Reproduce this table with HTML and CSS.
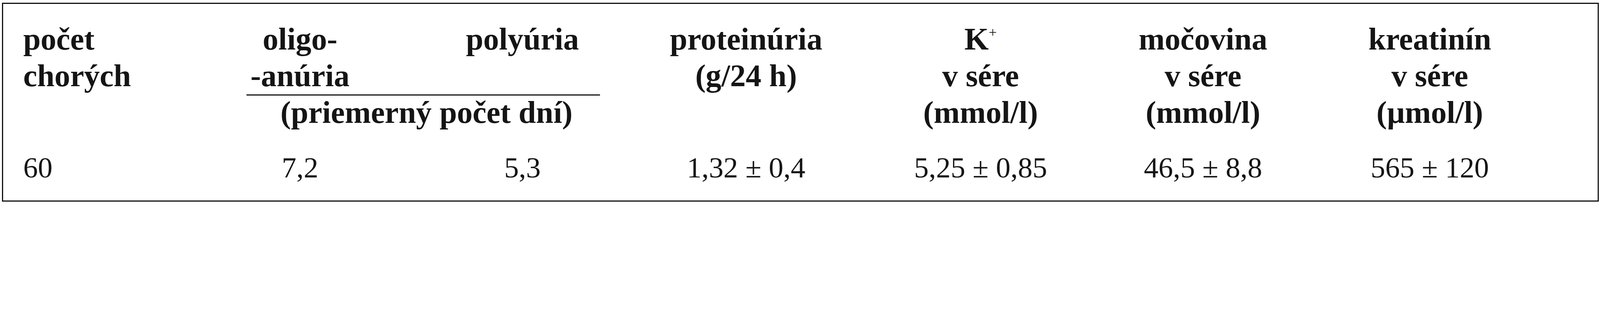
FILE: index.html
```html
<!DOCTYPE html>
<html lang="sk">
<head>
<meta charset="utf-8">
<title>Tabuľka</title>
<link rel="stylesheet" href="styles.css">
</head>
<body>
<div class="box">
  <div class="grid">
    <div class="hcell left">počet<br>chorých</div>
    <div class="group">
      <div class="pair">
        <div class="hcell">oligo-<br>-anúria</div>
        <div class="hcell">polyúria</div>
      </div>
      <div class="rule"></div>
      <div class="hcell sub">(priemerný počet dní)</div>
    </div>
    <div class="hcell">proteinúria<br>(g/24 h)</div>
    <div class="hcell">K<span class="sup">+</span><br>v sére<br>(mmol/l)</div>
    <div class="hcell">močovina<br>v sére<br>(mmol/l)</div>
    <div class="hcell">kreatinín<br>v sére<br>(µmol/l)</div>

    <div class="dcell left">60</div>
    <div class="dcell">7,2</div>
    <div class="dcell">5,3</div>
    <div class="dcell">1,32 ± 0,4</div>
    <div class="dcell">5,25 ± 0,85</div>
    <div class="dcell">46,5 ± 8,8</div>
    <div class="dcell">565 ± 120</div>
  </div>
</div>
</body>
</html>
```

FILE: styles.css
```css
/* one design unit = 1px of a 6237px-wide window; scales with the window */
:root {
  --u: calc(100vw / 6237);
}

html, body {
  background: #ffffff;
}

body {
  margin: calc(11 * var(--u)) 0 0 calc(8 * var(--u));
  font-family: "Liberation Serif", "Times New Roman", serif;
  color: #151515;
}

.box {
  box-sizing: border-box;
  width: calc(6224 * var(--u));
  height: calc(777 * var(--u));
  border: calc(5 * var(--u)) solid #111111;
  padding: calc(67 * var(--u)) calc(160 * var(--u)) 0 calc(78 * var(--u));
}

.grid {
  display: grid;
  grid-template-columns:
    calc(646 * var(--u)) calc(866 * var(--u)) calc(868 * var(--u))
    calc(876 * var(--u)) calc(952 * var(--u)) calc(782 * var(--u))
    calc(986 * var(--u));
  row-gap: calc(72 * var(--u));
}

.hcell {
  font-size: calc(122 * var(--u));
  font-weight: bold;
  line-height: calc(143 * var(--u));
  text-align: center;
  white-space: nowrap;
}

.dcell {
  font-size: calc(114 * var(--u));
  line-height: calc(143 * var(--u));
  text-align: center;
  white-space: nowrap;
}

.hcell.left,
.dcell.left {
  text-align: left;
}

.group {
  grid-column: 2 / 4;
  display: flex;
  flex-direction: column;
}

.pair {
  display: grid;
  grid-template-columns: calc(866 * var(--u)) calc(868 * var(--u));
}

.rule {
  height: calc(5 * var(--u));
  background: #151515;
  margin: 0 calc(131 * var(--u)) calc(-5 * var(--u)) calc(225 * var(--u));
}

.sub {
  padding-left: calc(118 * var(--u));
}

.sup {
  font-size: calc(56 * var(--u));
  font-weight: normal;
  line-height: 0;
  vertical-align: calc(49 * var(--u));
}
```
